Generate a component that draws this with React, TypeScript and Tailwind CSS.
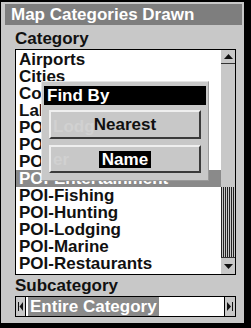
export default function App() {
  const items = [
    "Airports",
    "Cities",
    "Coastline",
    "Lakes",
    "POI-Auto",
    "POI-Banks",
    "POI-Dealer",
    "POI-Entertainment",
    "POI-Fishing",
    "POI-Hunting",
    "POI-Lodging",
    "POI-Marine",
    "POI-Restaurants",
  ];
  return (
    <div className="relative w-[251px] h-[328px] bg-black pl-px pt-[2px] pr-[7px] pb-[5px] font-['Liberation_Sans',Arial,sans-serif] font-bold text-[17px] leading-[17px] text-[#111]">
      <div className="h-full bg-[#c8c8c8] flex flex-col">
        <div className="mt-[2px] ml-[4px] mr-[2px] h-[21px] bg-[#7e7e7e] text-white flex items-center pl-[6px]">
          Map Categories Drawn
        </div>
        <div className="h-[24px] pl-[14px] flex items-end pb-[2px]">Category</div>
        <div className="ml-[14px] w-[221px] h-[226px] border border-black bg-white flex">
          <div className="flex-1 pt-px">
            {items.map((t, i) => (
              <div
                key={t}
                className={
                  i === 7
                    ? "h-[17px] pl-[3px] bg-[#8a8a8a] text-white whitespace-nowrap"
                    : "h-[17px] pl-[3px] whitespace-nowrap"
                }
              >
                {t}
              </div>
            ))}
          </div>
          <div className="w-[14px] bg-[#c8c8c8] flex flex-col">
            <div className="h-[14px] border-b border-[#333] flex items-center justify-center">
              <svg width="9" height="5" viewBox="0 0 9 5">
                <polygon points="4.5,0 9,5 0,5" fill="#111" />
              </svg>
            </div>
            <div className="h-[123px]" />
            <div className="h-[70px] bg-[repeating-linear-gradient(90deg,#222_0px,#222_1px,#c8c8c8_1px,#c8c8c8_2px)]" />
            <div className="flex-1 border-t border-[#333] flex items-center justify-center">
              <svg width="9" height="5" viewBox="0 0 9 5">
                <polygon points="0,0 9,0 4.5,5" fill="#111" />
              </svg>
            </div>
          </div>
        </div>
        <div className="h-[21px] pl-[14px] flex items-end pb-[2px]">Subcategory</div>
        <div className="ml-[14px] w-[221px] h-[21px] border border-black bg-white flex items-stretch">
          <div className="w-[10px] bg-[#c8c8c8] border-r border-black flex items-center justify-center">
            <svg width="6" height="9" viewBox="0 0 6 9">
              <rect x="0" y="0" width="1" height="9" fill="#111" />
              <polygon points="5,0 5,9 1.5,4.5" fill="#111" />
            </svg>
          </div>
          <div className="ml-[2px] px-[2px] bg-[#8a8a8a] text-white flex items-center whitespace-nowrap">
            Entire Category
          </div>
          <div className="ml-auto w-[11px] bg-[#c8c8c8] border-l border-black flex items-center justify-center">
            <svg width="6" height="9" viewBox="0 0 6 9">
              <polygon points="0,0 0,9 4,4.5" fill="#111" />
              <rect x="5" y="0" width="1" height="9" fill="#111" />
            </svg>
          </div>
        </div>
      </div>

      <div className="absolute left-[41px] top-[81px] w-[168px] h-[100px] bg-[#c8c8c8] border border-t-[#e4e4e4] border-l-[#e4e4e4] border-r-[#9a9a9a] border-b-[#9a9a9a] pt-[4px] px-[2px]">
        <div className="h-[19px] bg-black text-white flex items-center pl-[3px]">Find By</div>
        <div className="relative mt-[5px] ml-[5px] w-[152px] h-[29px] border-2 border-t-[#efefef] border-l-[#efefef] border-r-[#3a3a3a] border-b-[#3a3a3a] flex items-center justify-center">
          <span className="absolute left-[2px] top-[6px] text-[#d1d1d1]">Lodg</span>
          <span className="relative">Nearest</span>
        </div>
        <div className="relative mt-[6px] ml-[5px] w-[152px] h-[28px] border-2 border-t-[#efefef] border-l-[#efefef] border-r-[#3a3a3a] border-b-[#3a3a3a] flex items-center justify-center">
          <span className="absolute left-[2px] top-[4px] text-[#d1d1d1]">er</span>
          <span className="relative bg-black text-white px-[3px] h-[17px]">Name</span>
        </div>
      </div>
    </div>
  );
}
